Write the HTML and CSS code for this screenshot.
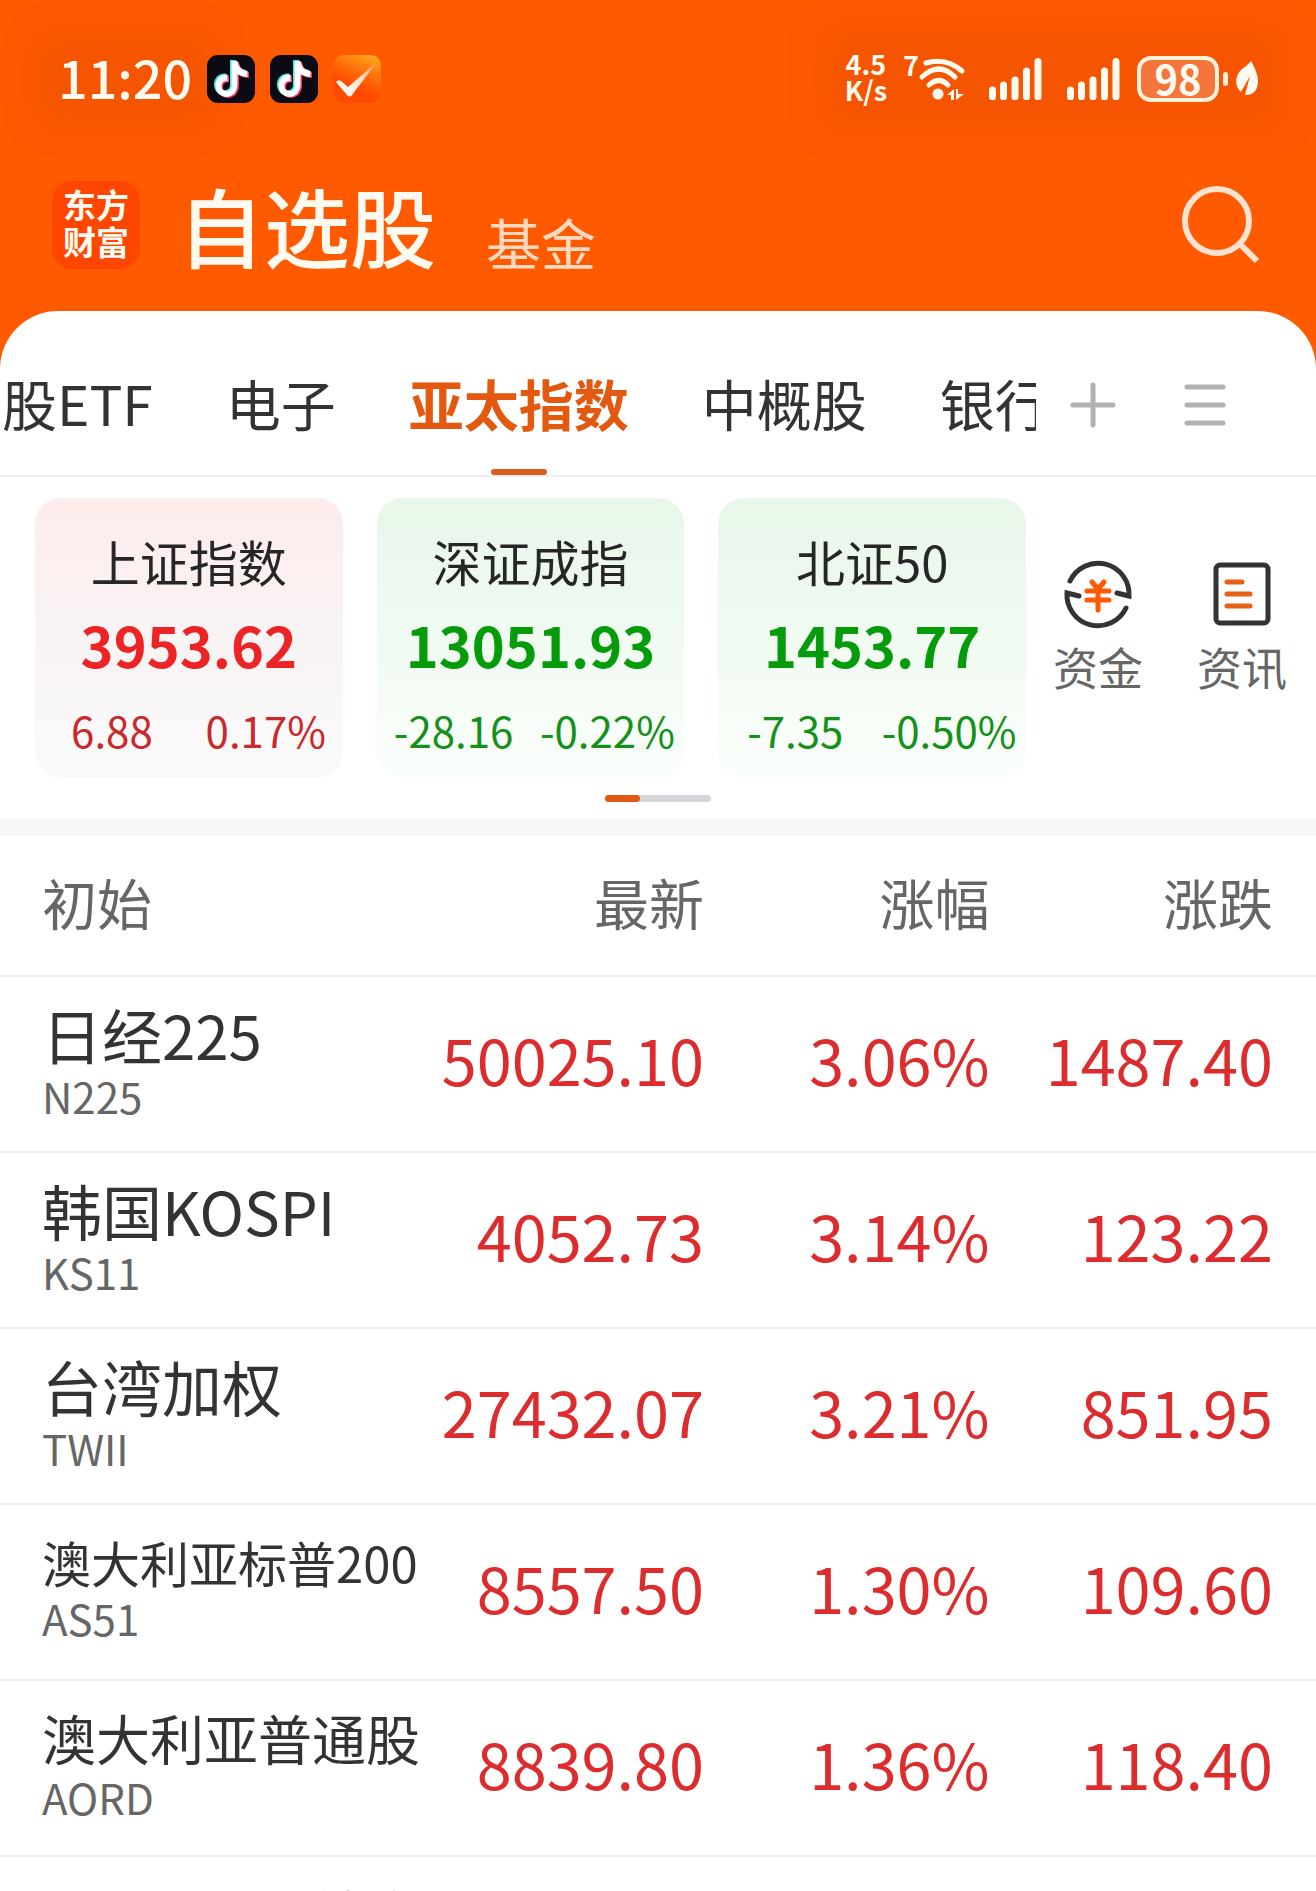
FILE: index.html
```html
<!DOCTYPE html>
<html lang="zh-CN">
<head>
  <meta charset="UTF-8">
  <meta name="viewport" content="width=device-width, initial-scale=1.0">
  <title>自选股</title>
  <link rel="stylesheet" href="styles.css">
</head>
<body>
  <svg class="sprite" aria-hidden="true">
    <defs>
      <linearGradient id="check-bg" x1="0.8" y1="0" x2="0.5" y2="0.7">
        <stop offset="0" stop-color="#ffa818"/>
        <stop offset="0.5" stop-color="#ff720c"/>
        <stop offset="1" stop-color="#ff4a00"/>
      </linearGradient>
      <linearGradient id="check-mark" x1="1" y1="0" x2="0.2" y2="1">
        <stop offset="0" stop-color="#ff9a50"/>
        <stop offset="0.5" stop-color="#ffe0cc"/>
        <stop offset="1" stop-color="#ffffff"/>
      </linearGradient>
      <path id="note" d="M23 6h6c1 6 4 9 10 10v6c-4 0-7-1-10-3v11c0 7-5 12-11 12S7 37 7 30.500s5-12 12-11v7c-3-1-6 1-6 4.500 0 3 2 5 5 5 3 0 5-2 5-5z"/>
      <symbol id="tiktok" viewBox="0 0 48 48">
        <rect width="48" height="48" rx="11" fill="#0b0b14"/>
        <use href="#note" x="0" y="-1" fill="#3fe9e4"/>
        <use href="#note" x="3" y="1" fill="#f5325c"/>
        <use href="#note" x="1.500" fill="#fff"/>
      </symbol>
      <symbol id="signal" viewBox="0 0 54 42">
        <path d="M3.500 32v7M14.500 27v12M26 22v17M37.500 13v26M49 3.500v35.500" stroke="#fffaf0" stroke-width="7" stroke-linecap="round"/>
      </symbol>
    </defs>
  </svg>

  <div class="app">
    <header class="header">
      <div class="status-bar">
        <div class="status-left">
          <span class="clock">11:20</span>
          <svg class="app-icon" viewBox="0 0 48 48"><use href="#tiktok"/></svg>
          <svg class="app-icon" viewBox="0 0 48 48"><use href="#tiktok"/></svg>
          <svg class="app-icon" viewBox="0 0 48 48">
            <rect width="48" height="48" rx="11" fill="url(#check-bg)"/>
            <path d="M3 27q2-3 5-1l7 6L44 7 19 40q-2 3-5 0z" fill="url(#check-mark)"/>
          </svg>
        </div>
        <div class="status-right">
          <div class="net-speed"><span>4.5</span><span>K/s</span></div>
          <div class="wifi">
            <span class="wifi-gen">7</span>
            <svg width="46" height="44" viewBox="0 0 46 44" fill="none" stroke="#fffaf0" stroke-width="5">
              <path d="M7 6Q27 0 43 14M3 20Q20 4 36 20M10 28q10-9 19 0" stroke-linecap="round"/>
              <circle cx="19" cy="37" r="5.500" fill="#fffaf0" stroke="none"/>
              <path d="M28 38l7-6v11h-3v-5zM45 37l-8 6V32h2v5z" fill="#fffaf0" stroke="none"/>
            </svg>
          </div>
          <svg class="signal" viewBox="0 0 54 42"><use href="#signal"/></svg>
          <svg class="signal" viewBox="0 0 54 42"><use href="#signal"/></svg>
          <div class="battery">
            <span class="battery-level">98</span>
            <span class="battery-tip"></span>
            <svg width="22" height="36" viewBox="0 0 22 36">
              <path d="M15 0c4 7 7 14 7 20 0 9-5 15-13 14L14 15 5 31C-2 25-1 14 6 8c4-3 7-5 9-8z" fill="#fffaf0"/>
            </svg>
          </div>
        </div>
      </div>

      <div class="title-bar">
        <div class="logo"><span>东方</span><span>财富</span></div>
        <h1>自选股</h1>
        <a class="fund-link" href="#fund">基金</a>
        <button class="icon-btn search" aria-label="搜索">
          <svg width="78" height="78" viewBox="0 0 78 78" fill="none" stroke="#ffe3d0" stroke-width="6">
            <circle cx="35" cy="35" r="32"/>
            <path d="M58 58l17 17"/>
          </svg>
        </button>
      </div>
    </header>

    <main class="panel">
      <nav class="tabs">
        <div class="tab-list">
          <a class="tab" href="#etf">股ETF</a>
          <a class="tab" href="#electronics">电子</a>
          <a class="tab active" href="#asia">亚太指数</a>
          <a class="tab" href="#china">中概股</a>
          <a class="tab" href="#bank">银行</a>
        </div>
        <div class="tab-tools">
          <button class="icon-btn" aria-label="添加分组">
            <svg width="46" height="46" viewBox="0 0 46 46" stroke="#b2b2b2" stroke-width="5" stroke-linecap="round">
              <path d="M23 3v40M3 23h40"/>
            </svg>
          </button>
          <button class="icon-btn" aria-label="管理分组">
            <svg width="42" height="46" viewBox="0 0 42 46" stroke="#b2b2b2" stroke-width="5" stroke-linecap="round">
              <path d="M3 5h36M3 23h36M3 41h36"/>
            </svg>
          </button>
        </div>
      </nav>

      <section class="overview">
        <div class="cards">
          <article class="card up">
            <h2>上证指数</h2>
            <p class="price">3953.62</p>
            <p class="change"><span>6.88</span><span>0.17%</span></p>
          </article>
          <article class="card down">
            <h2>深证成指</h2>
            <p class="price">13051.93</p>
            <p class="change"><span>-28.16</span><span>-0.22%</span></p>
          </article>
          <article class="card down">
            <h2>北证50</h2>
            <p class="price">1453.77</p>
            <p class="change"><span>-7.35</span><span>-0.50%</span></p>
          </article>
        </div>
        <div class="shortcuts">
          <a href="#capital">
            <svg width="70" height="70" viewBox="0 0 70 70" fill="none" stroke="#333" stroke-width="5" stroke-linecap="round">
              <path d="M7 22A31 31 0 0 1 66 37l-12-3M63 49A31 31 0 0 1 4 34l12 3"/>
              <path d="M29 23l6 7 6-7M24 32h22M24 41h22M35 31v20" stroke="#fe5a05"/>
            </svg>
            <span>资金</span>
          </a>
          <a href="#news">
            <svg width="70" height="70" viewBox="0 0 70 70" fill="none" stroke="#333" stroke-width="5" stroke-linecap="round">
              <rect x="9" y="6" width="52" height="58" rx="4"/>
              <path d="M20 23h15M20 35h23M20 47h23" stroke="#e8611a"/>
            </svg>
            <span>资讯</span>
          </a>
        </div>
      </section>
      <div class="pager"><span></span></div>

      <table class="quotes">
        <thead>
          <tr><th>初始</th><th>最新</th><th>涨幅</th><th>涨跌</th></tr>
        </thead>
        <tbody>
          <tr>
            <td><div class="name">日经225</div><div class="code">N225</div></td>
            <td>50025.10</td><td>3.06%</td><td>1487.40</td>
          </tr>
          <tr>
            <td><div class="name">韩国KOSPI</div><div class="code">KS11</div></td>
            <td>4052.73</td><td>3.14%</td><td>123.22</td>
          </tr>
          <tr>
            <td><div class="name">台湾加权</div><div class="code">TWII</div></td>
            <td>27432.07</td><td>3.21%</td><td>851.95</td>
          </tr>
          <tr>
            <td><div class="name small">澳大利亚标普200</div><div class="code">AS51</div></td>
            <td>8557.50</td><td>1.30%</td><td>109.60</td>
          </tr>
          <tr>
            <td><div class="name medium">澳大利亚普通股</div><div class="code">AORD</div></td>
            <td>8839.80</td><td>1.36%</td><td>118.40</td>
          </tr>
          <tr>
            <td><div class="name medium">印尼雅加达综合</div><div class="code">JKSE</div></td>
            <td></td><td></td><td></td>
          </tr>
        </tbody>
      </table>
    </main>
  </div>
</body>
</html>
```
FILE: styles.css
```css
* {
  margin: 0;
  padding: 0;
  box-sizing: border-box;
}

body {
  font-family: "Noto Sans CJK SC", "Noto Sans", sans-serif;
  color: #333;
  background: #fff;
}

a {
  color: inherit;
  text-decoration: none;
}

svg {
  display: block;
  flex-shrink: 0;
  overflow: visible;
}

.sprite {
  position: absolute;
  width: 0;
  height: 0;
}

.app {
  height: 100vh;
  overflow: hidden;
  background: #ff5a00;
}

/* Header */
.header {
  color: #fffaf0;
}

.status-bar {
  display: flex;
  justify-content: space-between;
  align-items: center;
  height: 158px;
  padding: 0 58px;
}

.status-left,
.status-right {
  display: flex;
  align-items: center;
}

.status-left {
  gap: 15px;
}

.clock,
.status-right {
  background: rgba(205, 65, 0, 0.2);
  box-shadow: 0 0 32px 24px rgba(205, 65, 0, 0.2);
}

.clock {
  font-size: 52px;
  line-height: 44px;
  padding-bottom: 4px;
  font-weight: 500;
}

.app-icon {
  position: relative;
  width: 48px;
  height: 48px;
}

.status-right {
  gap: 24px;
}

.net-speed {
  display: flex;
  flex-direction: column;
  padding-bottom: 4px;
  font-size: 27px;
  line-height: 26px;
  font-weight: 700;
  text-align: center;
}

.wifi {
  display: flex;
  margin-left: -8px;
}

.wifi-gen {
  font-size: 27px;
  line-height: 16px;
  font-weight: 700;
}

.signal {
  width: 54px;
  height: 42px;
}

.battery {
  display: flex;
  align-items: center;
  gap: 4px;
  margin-left: -8px;
}

.battery-level {
  width: 82px;
  height: 46px;
  border: 4px solid #fff0dc;
  border-radius: 14px;
  background: #f4763a;
  font-size: 40px;
  line-height: 36px;
  font-weight: 700;
  text-align: center;
}

.battery-tip {
  width: 5px;
  height: 14px;
  margin-right: 4px;
  border-radius: 3px;
  background: #fff0dc;
}

.title-bar {
  display: flex;
  align-items: center;
  height: 153px;
  padding: 0 56px 20px 52px;
}

.logo {
  display: flex;
  flex-direction: column;
  justify-content: center;
  width: 88px;
  height: 88px;
  padding-bottom: 4px;
  border-radius: 20px;
  background: #ff4600;
  font-size: 33px;
  line-height: 37px;
  font-weight: 700;
  text-align: center;
}

.title-bar h1 {
  margin-left: 38px;
  font-size: 86px;
  line-height: 88px;
  font-weight: 500;
}

.fund-link {
  margin-left: 50px;
  padding-top: 32px;
  font-size: 55px;
  line-height: 60px;
  color: #ffd9c0;
}

.icon-btn {
  border: none;
  background: transparent;
  cursor: pointer;
}

.search {
  margin-left: auto;
}

/* Panel */
.panel {
  min-height: 100%;
  border-radius: 58px 58px 0 0;
  background: #fff;
  overflow: hidden;
}

.tabs {
  display: flex;
  height: 166px;
  padding-right: 90px;
  border-bottom: 2px solid #eee;
}

.tab-list {
  display: flex;
  flex: 1;
  gap: 73px;
  padding-left: 2px;
  overflow: hidden;
  white-space: nowrap;
}

.tab {
  position: relative;
  flex-shrink: 0;
  font-size: 55px;
  line-height: 182px;
}

.tab.active {
  color: #e2590f;
  font-weight: 700;
}

.tab.active::after {
  content: "";
  position: absolute;
  left: 50%;
  bottom: 0;
  width: 56px;
  height: 6px;
  margin-left: -28px;
  border-radius: 3px;
  background: #d95f1e;
}

.tab-tools {
  display: flex;
  align-items: center;
  gap: 68px;
  padding: 24px 0 0 34px;
}

/* Index cards */
.overview {
  display: flex;
  padding: 21px 2px 0 35px;
}

.cards {
  display: grid;
  flex: 1;
  grid-template-columns: repeat(3, 1fr);
  gap: 34px;
}

.card {
  height: 280px;
  padding-top: 26px;
  border-radius: 26px;
  text-align: center;
}

.card.up {
  background: linear-gradient(#feebeb, #f9f3f3 45%, #fafafa);
  color: #c9282d;
}

.card.down {
  background: linear-gradient(#e9f6ea, #f1fbf2 55%, #fbfefb);
  color: #14911a;
}

.card h2 {
  font-size: 49px;
  line-height: 74px;
  font-weight: 400;
  color: #262626;
}

.price {
  font-size: 56px;
  line-height: 92px;
  font-weight: 700;
}

.up .price {
  color: #ec2426;
}

.down .price {
  color: #069b0a;
}

.change {
  display: grid;
  grid-template-columns: 1fr 1fr;
  font-size: 42px;
  line-height: 80px;
}

.shortcuts {
  display: grid;
  grid-template-columns: 144px 144px;
  padding-top: 61px;
}

.shortcuts a {
  display: flex;
  flex-direction: column;
  align-items: center;
  gap: 8px;
  font-size: 45px;
  line-height: 60px;
  color: #666;
}

.pager {
  width: 106px;
  height: 7px;
  margin: 17px auto;
  border-radius: 4px;
  background: #d5d6dc;
}

.pager span {
  display: block;
  width: 35px;
  height: 7px;
  border-radius: 4px;
  background: #e05a14;
}

/* Quotes */
.quotes {
  width: 100%;
  border-top: 17px solid #f6f7f9;
  border-collapse: separate;
  border-spacing: 0;
  table-layout: fixed;
}

.quotes th,
.quotes td {
  border-bottom: 2px solid #f1f1f1;
  text-align: right;
  white-space: nowrap;
}

.quotes th {
  height: 141px;
  padding-bottom: 10px;
  font-size: 55px;
  line-height: 64px;
  font-weight: 400;
  color: #666;
}

.quotes td {
  height: 176px;
  padding-bottom: 10px;
  font-size: 63px;
  line-height: 72px;
  color: #dc2c2e;
}

.quotes th:first-child,
.quotes td:first-child {
  width: 33%;
  padding-left: 42px;
  text-align: left;
}

.quotes td:first-child {
  padding-bottom: 4px;
}

.quotes th:nth-child(2) {
  width: 20.5%;
}

.quotes th:nth-child(3) {
  width: 21.7%;
}

.quotes th:last-child,
.quotes td:last-child {
  padding-right: 43px;
}

.name {
  font-size: 60px;
  line-height: 68px;
  color: #333;
}

.name.medium {
  font-size: 54px;
  line-height: 62px;
}

.name.small {
  font-size: 49px;
  line-height: 56px;
}

.code {
  font-size: 42px;
  line-height: 56px;
  color: #666;
}
```
